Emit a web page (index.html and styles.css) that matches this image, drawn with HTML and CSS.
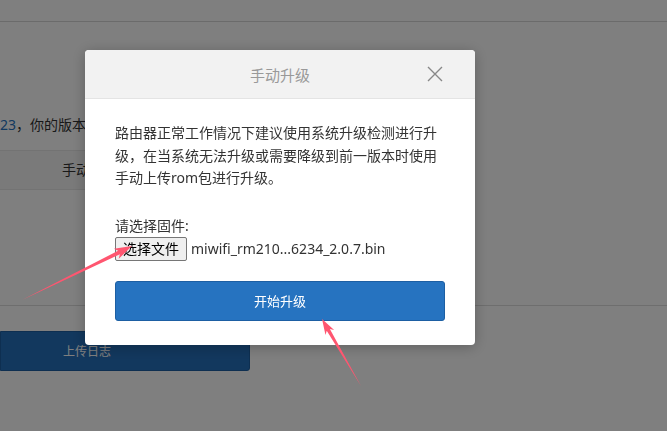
FILE: index.html
```html
<!DOCTYPE html>
<html lang="zh-CN">
<head>
    <meta charset="UTF-8">
    <meta name="viewport" content="width=device-width, initial-scale=1.0">
    <title>手动升级</title>
    <link rel="stylesheet" href="styles.css">
</head>
<body>
    <div class="page">
        <div class="topbar"></div>
        <p class="version"><span class="num">23</span>，你的版本已经是最新版本</p>
        <div class="tabs">
            <div class="tab">手动升级</div>
        </div>
        <div class="divider"></div>
        <button class="log-btn">上传日志</button>
    </div>

    <div class="mask"></div>

    <div class="dialog">
        <div class="dialog-head">
            <h3>手动升级</h3>
            <span class="close">
                <svg width="16" height="16" viewBox="0 0 16 16">
                    <path d="M1 1L15 15M15 1L1 15" stroke="#888" stroke-width="1.4" fill="none"/>
                </svg>
            </span>
        </div>
        <div class="dialog-body">
            <p class="tip">路由器正常工作情况下建议使用系统升级检测进行升级，在当系统无法升级或需要降级到前一版本时使用手动上传rom包进行升级。</p>
            <label class="field-label">请选择固件:</label>
            <div class="file-row">
                <button class="file-btn">选择文件</button>
                <span class="file-name">miwifi_rm210...6234_2.0.7.bin</span>
            </div>
            <button class="submit-btn">开始升级</button>
        </div>
    </div>

    <!-- annotation arrows -->
    <svg class="marks" width="667" height="431" viewBox="0 0 667 431">
        <g transform="translate(22,300) rotate(-26.1)" fill="#ff5670">
            <polygon points="0,0 108,-2 105,-5.5 122.5,0 105,5.5 108,2"/>
        </g>
        <g transform="translate(361,386) rotate(-120.2)" fill="#ff5670">
            <polygon points="0,0 65,-1.8 62,-5 77.5,0 62,5 65,1.8"/>
        </g>
    </svg>
</body>
</html>
```

FILE: styles.css
```css
body {
    margin: 0;
    background: #fff;
    font-family: "Noto Sans", "Noto Sans CJK SC", sans-serif;
    color: #333;
    overflow: hidden;
}
.page {
    width: 667px;
    height: 431px;
}
.topbar {
    height: 21px;
    border-bottom: 1px solid #d6d6d6;
}
/* the page behind the dialog is cut where the dialog starts */
.version {
    margin: 92px 0 0 0;
    width: 85px;
    overflow: hidden;
    white-space: nowrap;
    font-size: 14px;
    line-height: 22px;
    color: #333;
}
.num {
    color: #2673c0;
}
.tabs {
    margin-top: 14px;
    width: 85px;
    height: 38px;
    overflow: hidden;
    background: #f5f5f5;
    border-top: 1px solid #e6e6e6;
    border-bottom: 1px solid #e6e6e6;
    display: flex;
}
.tab {
    flex: none;
    width: 180px;
    font-size: 14px;
    line-height: 38px;
    text-align: center;
}
.divider {
    margin-top: 115px;
    border-top: 1px solid #dcdcdc;
}
.log-btn {
    display: block;
    margin-top: 25px;
    width: 250px;
    height: 40px;
    padding: 0 0 0 62px;
    text-align: left;
    background: #2570bc;
    border: 1px solid #1d5fa3;
    border-radius: 0 3px 3px 0;
    color: #fff;
    font-family: inherit;
    font-size: 12px;
}
.mask {
    position: fixed;
    inset: 0;
    background: rgba(0,0,0,0.5);
}
.dialog {
    position: fixed;
    left: 85px;
    top: 50px;
    width: 390px;
    background: #fff;
    border-radius: 4px;
    box-shadow: 0 2px 14px rgba(0,0,0,0.25);
    overflow: hidden;
}
.dialog-head {
    height: 48px;
    background: #f2f2f2;
    border-bottom: 1px solid #e4e4e4;
    display: flex;
    align-items: center;
    justify-content: center;
    position: relative;
}
.dialog-head h3 {
    margin: 0;
    font-size: 15px;
    font-weight: normal;
    color: #999;
}
.close {
    position: absolute;
    right: 32px;
    top: 16px;
    width: 16px;
    height: 16px;
}
.close svg {
    display: block;
}
.dialog-body {
    padding: 23px 30px 24px;
}
.tip {
    margin: 0;
    font-size: 14px;
    line-height: 22.5px;
}
.field-label {
    display: block;
    margin-top: 25px;
    font-size: 14px;
    line-height: 22px;
}
.file-row {
    display: flex;
    align-items: center;
    gap: 4px;
    height: 24px;
}
.file-btn {
    height: 24px;
    padding: 0 7px;
    background: #efefef;
    border: 1px solid #767676;
    border-radius: 2px;
    color: #000;
    font-family: inherit;
    font-size: 14px;
    line-height: 20px;
}
.file-name {
    font-size: 14px;
    color: #333;
}
.submit-btn {
    display: block;
    margin-top: 20px;
    width: 100%;
    height: 40px;
    background: #2673c0;
    border: 1px solid #1d5fa3;
    border-radius: 3px;
    color: #fff;
    font-family: inherit;
    font-size: 13px;
}
.marks {
    position: fixed;
    left: 0;
    top: 0;
    pointer-events: none;
}
```
